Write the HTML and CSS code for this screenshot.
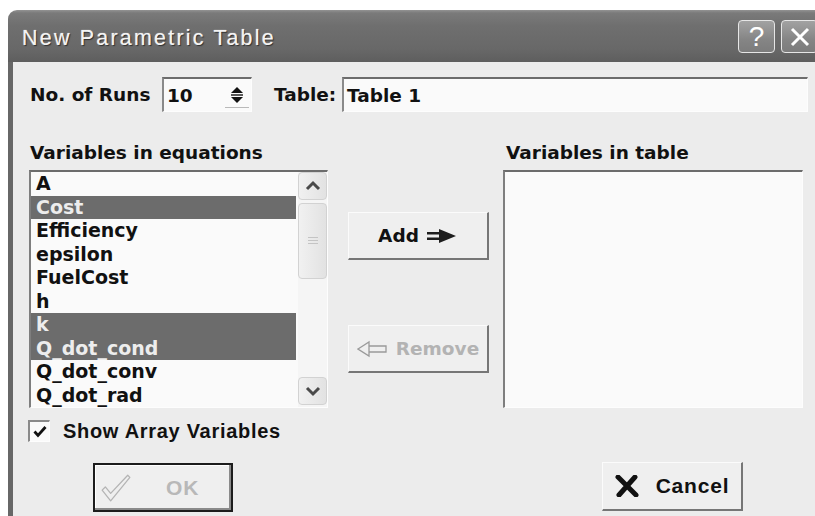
FILE: index.html
```html
<!DOCTYPE html>
<html lang="en">
<head>
<meta charset="utf-8">
<title>New Parametric Table</title>
<link rel="stylesheet" href="styles.css">
</head>
<body>
<div class="window">
  <div class="titlebar">
    <span class="title">New Parametric Table</span>
    <div class="caption-btns">
      <span class="cap-btn help">?</span>
      <span class="cap-btn close">
        <svg width="22" height="22" viewBox="0 0 22 22"><path d="M3 3 L19 19 M19 3 L3 19" stroke="#fff" stroke-width="3" fill="none"/></svg>
      </span>
    </div>
  </div>

  <div class="client">
    <div class="row-top">
      <span class="lbl runs-lbl">No. of Runs</span>
      <div class="field spin">
        <span class="field-text">10</span>
        <span class="spin-btn">
          <svg width="18" height="20" viewBox="0 0 18 20">
            <path d="M9 2 L15 8 L3 8 Z" fill="#111"/>
            <path d="M3 10 L15 10" stroke="#111" stroke-width="1.4"/>
            <path d="M3 12 L15 12 L9 18 Z" fill="#111"/>
          </svg>
        </span>
      </div>
      <span class="lbl table-lbl">Table:</span>
      <div class="field table-name"><span class="field-text">Table 1</span></div>
    </div>

    <div class="lists">
      <div class="col col-left">
        <div class="lbl col-lbl">Variables in equations</div>
        <div class="listbox">
          <ul class="items">
            <li>A</li>
            <li class="sel">Cost</li>
            <li>Efficiency</li>
            <li>epsilon</li>
            <li>FuelCost</li>
            <li>h</li>
            <li class="sel">k</li>
            <li class="sel">Q_dot_cond</li>
            <li>Q_dot_conv</li>
            <li>Q_dot_rad</li>
          </ul>
          <div class="vscroll">
            <span class="sb-btn">
              <svg width="16" height="12" viewBox="0 0 16 12"><path d="M2 9 L8 3 L14 9" stroke="#4a4a4a" stroke-width="3" fill="none"/></svg>
            </span>
            <span class="sb-thumb">
              <svg width="12" height="10" viewBox="0 0 12 10"><path d="M1 1.5 H11 M1 4.5 H11 M1 7.5 H11" stroke="#c4c4c4" stroke-width="1.2"/></svg>
            </span>
            <span class="sb-track"></span>
            <span class="sb-btn">
              <svg width="16" height="12" viewBox="0 0 16 12"><path d="M2 3 L8 9 L14 3" stroke="#4a4a4a" stroke-width="3" fill="none"/></svg>
            </span>
          </div>
        </div>
      </div>

      <div class="col col-mid">
        <button class="btn add-btn" type="button">
          <span>Add</span>
          <svg width="31" height="18" viewBox="0 0 31 18">
            <path d="M0 5 H13 V7.5 H0 Z M0 10.5 H13 V13 H0 Z M12 2 L29 9 L12 16 Z" fill="#1e1e1e"/>
          </svg>
        </button>
        <button class="btn remove-btn" type="button" disabled>
          <svg width="31" height="18" viewBox="0 0 31 18">
            <path d="M1 9 L12 2 V6 H29 V12 H12 V16 Z M12 6 V12" stroke="#9a9a9a" stroke-width="1.3" fill="none" stroke-linejoin="miter"/>
          </svg>
          <span>Remove</span>
        </button>
      </div>

      <div class="col col-right">
        <div class="lbl col-lbl right-lbl">Variables in table</div>
        <div class="listbox empty"></div>
      </div>
    </div>

    <label class="check-row">
      <span class="checkbox">
        <svg width="16" height="16" viewBox="0 0 16 16"><path d="M2.5 7.5 L6 11.5 L13.5 3" stroke="#111" stroke-width="2.8" fill="none"/></svg>
      </span>
      <span class="check-lbl">Show Array Variables</span>
    </label>

    <div class="btn-row">
      <button class="btn dlg-btn ok-btn" type="button" disabled>
        <svg width="32" height="32" viewBox="0 0 30 30">
          <path d="M2 17 L5 14 L10 20 L26 3 L28 5 L10 27 Z" stroke="#b4b4b4" stroke-width="1.2" fill="none" stroke-linejoin="round"/>
        </svg>
        <span>OK</span>
      </button>
      <button class="btn dlg-btn cancel-btn" type="button">
        <svg width="24" height="22" viewBox="0 0 24 22">
          <path d="M3 2 L21 20 M20 2 L4 20" stroke="#111" stroke-width="5" stroke-linecap="round" fill="none"/>
        </svg>
        <span>Cancel</span>
      </button>
    </div>
  </div>
</div>
</body>
</html>
```

FILE: styles.css
```css
html, body {
  margin: 0;
  padding: 0;
  background: #fff;
  overflow: hidden;
}

body {
  width: 815px;
  height: 516px;
  font-family: "DejaVu Sans", sans-serif;
  font-weight: bold;
  font-size: 18.5px;
  color: #111;
}

.window {
  margin: 10px 0 0 8px;
  width: 815px;
}

/* caption bar */
.titlebar {
  height: 52px;
  border-radius: 9px 0 0 0;
  background: linear-gradient(#939393 0, #7a7a7a 3px, #6f6f6f 30%, #686868 75%, #5e5e5e 100%);
  display: flex;
  align-items: center;
  padding: 0 5px 0 14px;
  box-sizing: border-box;
}

.title {
  flex: 1;
  font-family: "Liberation Sans", Arial, sans-serif;
  font-weight: normal;
  font-size: 21.5px;
  letter-spacing: 2.2px;
  color: #f4f4f4;
  text-shadow: 1px 1px 1px #2e2e2e, 0 0 1px #f4f4f4;
  padding-top: 4px;
}

.caption-btns {
  display: flex;
  gap: 6px;
  padding-top: 1px;
}

.cap-btn {
  width: 35px;
  height: 31px;
  border: 1px solid #e6e6e6;
  border-radius: 4px;
  background: linear-gradient(#a2a2a2, #858585 60%, #7c7c7c);
  display: flex;
  align-items: center;
  justify-content: center;
  color: #fff;
  font-family: "Liberation Sans", Arial, sans-serif;
  font-weight: normal;
  font-size: 28px;
}

/* dialog client area */
.client {
  background: #ececec;
  border-left: 5px solid #676767;
  padding: 15px 0 0 16px;
  height: 454px;
  box-sizing: border-box;
}

.lbl {
  display: block;
  white-space: nowrap;
}

.row-top {
  display: flex;
  align-items: center;
  height: 35px;
}

.runs-lbl {
  width: 132px;
  padding-left: 1px;
}

.field {
  height: 35px;
  box-sizing: border-box;
  background: #fafafa;
  border-top: 2px solid #6c6c6c;
  border-left: 2px solid #8a8a8a;
  border-right: 1px solid #fdfdfd;
  border-bottom: 1px solid #fdfdfd;
  display: flex;
  align-items: center;
}

.field-text {
  padding-left: 3px;
  flex: 1;
}

.spin {
  width: 90px;
}

.spin-btn {
  width: 24px;
  height: 24px;
  display: flex;
  align-items: center;
  justify-content: center;
  border-bottom: 1px solid #b9b9b9;
  margin-right: 2px;
}

.table-lbl {
  margin-left: 20px;
  width: 70px;
  padding-left: 2px;
  box-sizing: border-box;
}

.table-name {
  width: 466px;
}

/* the two list columns and the buttons between them */
.lists {
  display: flex;
  margin-top: 30px;
}

.col-lbl {
  height: 22px;
  line-height: 22px;
  margin-bottom: 6px;
}

.col-left .col-lbl {
  padding-left: 1px;
}

.right-lbl {
  padding-left: 3px;
}

.col-left {
  width: 299px;
}

.col-mid {
  width: 141px;
  margin-left: 20px;
  display: flex;
  flex-direction: column;
  padding-top: 70px;
  gap: 65px;
}

.col-right {
  width: 300px;
  margin-left: 14px;
}

.listbox {
  height: 238px;
  box-sizing: border-box;
  background: #fafafa;
  border-top: 2px solid #6c6c6c;
  border-left: 2px solid #7e7e7e;
  border-right: 1px solid #fdfdfd;
  border-bottom: 1px solid #fdfdfd;
  display: flex;
}

.items {
  list-style: none;
  margin: 0;
  padding: 0;
  flex: 1;
  overflow: hidden;
  font-size: 19px;
}

.items li {
  height: 23.5px;
  line-height: 23.5px;
  padding-left: 5px;
  white-space: nowrap;
}

.items li.sel {
  background: #6c6c6c;
  color: #ededed;
}

.vscroll {
  width: 29px;
  margin-left: 2px;
  display: flex;
  flex-direction: column;
  background: #f5f5f5;
}

.sb-btn,
.sb-thumb {
  box-sizing: border-box;
  border: 1px solid #d2d2d2;
  border-radius: 4px;
  background: linear-gradient(90deg, #f1f1f1, #e2e2e2);
  display: flex;
  align-items: center;
  justify-content: center;
}

.sb-btn {
  height: 28px;
}

.sb-thumb {
  height: 76px;
  margin-top: 3px;
}

.sb-track {
  flex: 1;
}

.sb-btn:last-child {
  margin-bottom: 2px;
}

/* push buttons */
.btn {
  font: inherit;
  color: #111;
  margin: 0;
  padding: 0;
  background: #efefef;
  box-sizing: border-box;
  display: flex;
  align-items: center;
  justify-content: center;
  gap: 8px;
  border-top: 1px solid #fbfbfb;
  border-left: 1px solid #fbfbfb;
  border-right: 2px solid #767676;
  border-bottom: 2px solid #767676;
}

.add-btn,
.remove-btn {
  width: 141px;
  height: 48px;
}

.remove-btn {
  color: #b3b3b3;
}

.check-row {
  display: flex;
  align-items: center;
  margin-top: 12px;
  margin-left: -1px;
  height: 22px;
}

.checkbox {
  width: 22px;
  height: 22px;
  box-sizing: border-box;
  background: #fafafa;
  border-top: 2px solid #8a8a8a;
  border-left: 2px solid #8a8a8a;
  border-right: 1px solid #fdfdfd;
  border-bottom: 1px solid #fdfdfd;
  display: flex;
  align-items: center;
  justify-content: center;
}

.check-lbl {
  margin-left: 13px;
  font-family: "Liberation Sans", Arial, sans-serif;
  font-size: 20px;
  letter-spacing: 0.7px;
}

.btn-row {
  display: flex;
  margin-top: 20px;
}

.dlg-btn {
  height: 49px;
  font-family: "Liberation Sans", Arial, sans-serif;
  font-size: 21px;
  letter-spacing: 0.8px;
}

.ok-btn {
  width: 140px;
  margin-left: 64px;
  margin-top: 1px;
  border: 2px solid #1c1c1c;
  box-shadow: inset -2px -2px 0 #8a8a8a, inset 1px 1px 0 #fff;
  color: #b8b8b8;
  justify-content: flex-start;
  padding-left: 5px;
  gap: 34px;
}

.cancel-btn {
  width: 141px;
  margin-left: 369px;
  gap: 17px;
}
```
